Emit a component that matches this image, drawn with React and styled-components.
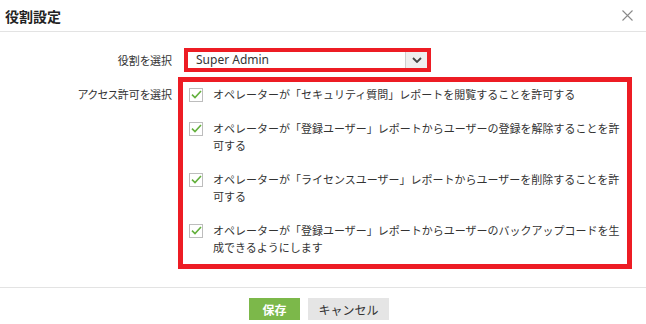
import styled, { createGlobalStyle } from "styled-components";

const GlobalStyle = createGlobalStyle`
  html, body {
    margin: 0;
    padding: 0;
    background: #fff;
  }
  body {
    font-family: "Noto Sans CJK JP", "Noto Sans", sans-serif;
    color: #333;
  }
`;

const Dialog = styled.div`
  width: 646px;
  height: 324px;
  display: flex;
  flex-direction: column;
  background: #fff;
  overflow: hidden;
`;

const Header = styled.div`
  height: 31px;
  display: flex;
  align-items: center;
  justify-content: space-between;
  padding: 0 13px 0 5px;
  border-bottom: 1px solid #e3e3e3;
  flex-shrink: 0;
`;

const Title = styled.h1`
  margin: 0;
  font-size: 14px;
  font-weight: bold;
  color: #222;
  line-height: 1;
`;

const Close = styled.button`
  border: 0;
  background: none;
  padding: 0;
  width: 11px;
  height: 11px;
  display: flex;
  cursor: pointer;
`;

const Form = styled.div`
  flex: 1;
  display: grid;
  grid-template-columns: 172px 1fr;
  grid-template-rows: auto auto;
  align-content: start;
  column-gap: 6px;
  row-gap: 5px;
  padding-top: 16px;
`;

const Label = styled.div`
  font-size: 11px;
  line-height: 17px;
  color: #333;
  text-align: right;
  white-space: nowrap;
  font-feature-settings: "palt";
  align-self: ${(p) => (p.top ? "start" : "center")};
  margin-top: ${(p) => (p.top ? "9px" : "0")};
`;

const Highlight = styled.div`
  box-sizing: border-box;
  border: ${(p) => p.thick || 4}px solid #ed1c24;
`;

const SelectWrap = styled(Highlight)`
  width: 247px;
  margin-left: 6px;
`;

const Select = styled.div`
  height: 16px;
  display: flex;
  align-items: stretch;
  background: #fff;
`;

const SelectValue = styled.div`
  flex: 1;
  padding-left: 8px;
  font-family: "Noto Sans", sans-serif;
  font-size: 12px;
  line-height: 16px;
  color: #333;
`;

const SelectArrow = styled.div`
  width: 21px;
  background: #efefef;
  border-left: 1px solid #cfcfcf;
  display: flex;
  align-items: center;
  justify-content: center;
`;

const PermBox = styled(Highlight)`
  width: 454px;
  padding: 4px 4px 8px 6px;
  display: flex;
  flex-direction: column;
  gap: 17px;
`;

const Item = styled.label`
  display: flex;
  align-items: flex-start;
  gap: 10px;
  font-size: 11px;
  line-height: 17px;
  color: #333;
`;

const Check = styled.span`
  flex-shrink: 0;
  box-sizing: border-box;
  width: 14px;
  height: 14px;
  margin-top: 1.5px;
  border: 1px solid #bdbdbd;
  background: #fff;
  display: flex;
  align-items: center;
  justify-content: center;
`;

const Footer = styled.div`
  height: 37px;
  box-sizing: border-box;
  border-top: 1px solid #e3e3e3;
  display: flex;
  justify-content: center;
  gap: 8px;
  padding: 10px 8px 0 0;
  flex-shrink: 0;
`;

const Button = styled.button`
  height: 22px;
  border: 0;
  padding: 0;
  width: ${(p) => (p.primary ? "51px" : "81px")};
  background: ${(p) => (p.primary ? "#7cb84a" : "#e5e5e5")};
  color: ${(p) => (p.primary ? "#fff" : "#333")};
  font-family: "Noto Sans CJK JP", sans-serif;
  font-size: 12px;
  font-weight: ${(p) => (p.primary ? "bold" : "normal")};
  cursor: pointer;
`;

const permissions = [
  "オペレーターが「セキュリティ質問」レポートを閲覧することを許可する",
  "オペレーターが「登録ユーザー」レポートからユーザーの登録を解除することを許可する",
  "オペレーターが「ライセンスユーザー」レポートからユーザーを削除することを許可する",
  "オペレーターが「登録ユーザー」レポートからユーザーのバックアップコードを生成できるようにします",
];

function CheckMark() {
  return (
    <svg width="11" height="9" viewBox="0 0 11 9">
      <path d="M1 4.6 L4 7.5 L10 1" fill="none" stroke="#63b03c" strokeWidth="1.6" />
    </svg>
  );
}

export default function App() {
  return (
    <>
      <GlobalStyle />
      <Dialog>
        <Header>
          <Title>役割設定</Title>
          <Close aria-label="close">
            <svg width="11" height="11" viewBox="0 0 11 11">
              <path d="M0.5 0.5 L10.5 10.5 M10.5 0.5 L0.5 10.5" stroke="#8a8a8a" strokeWidth="1.1" />
            </svg>
          </Close>
        </Header>
        <Form>
          <Label>役割を選択</Label>
          <SelectWrap>
            <Select>
              <SelectValue>Super Admin</SelectValue>
              <SelectArrow>
                <svg width="10" height="6" viewBox="0 0 10 6">
                  <path d="M1 1 L5 5 L9 1" fill="none" stroke="#444" strokeWidth="1.8" />
                </svg>
              </SelectArrow>
            </Select>
          </SelectWrap>
          <Label top>アクセス許可を選択</Label>
          <PermBox thick={5}>
            {permissions.map((text) => (
              <Item key={text}>
                <Check>
                  <CheckMark />
                </Check>
                <span>{text}</span>
              </Item>
            ))}
          </PermBox>
        </Form>
        <Footer>
          <Button primary>保存</Button>
          <Button>キャンセル</Button>
        </Footer>
      </Dialog>
    </>
  );
}
